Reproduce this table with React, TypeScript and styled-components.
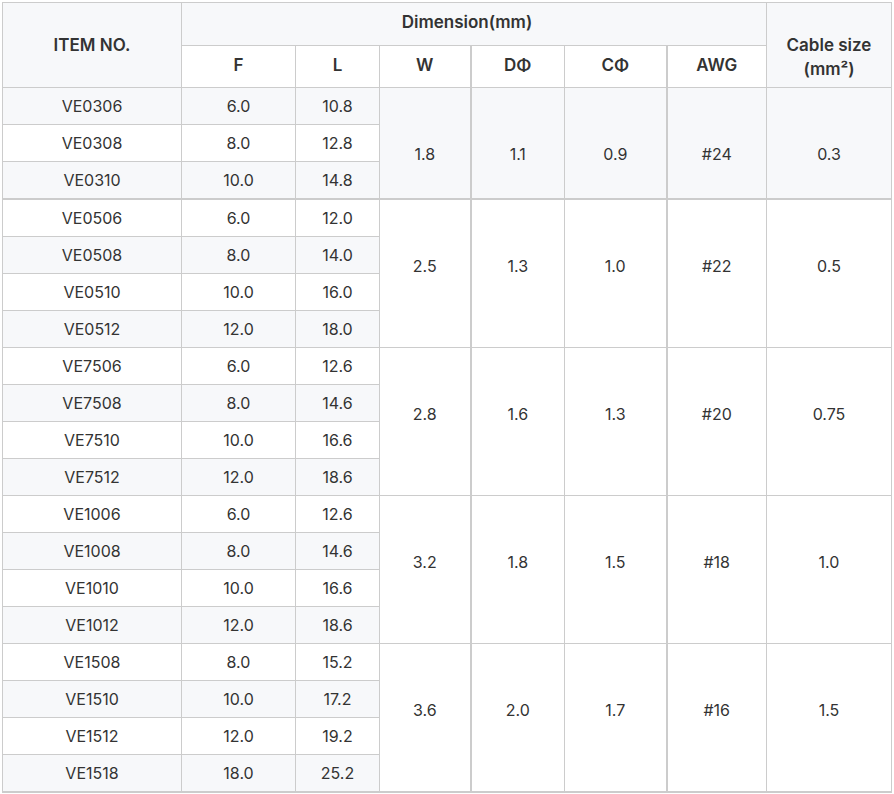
import React from "react";
import styled, { createGlobalStyle } from "styled-components";

const Global = createGlobalStyle`
  html, body { margin: 0; padding: 0; background: #ffffff; }
  body { font-family: Inter, "Noto Sans", "Liberation Sans", sans-serif; color: #333333; }
`;

const Wrap = styled.div`
  padding: 2px 3px 2px 2px;
`;

const Table = styled.table`
  width: 889px;
  border-collapse: collapse;
  table-layout: fixed;
  font-size: 16px;
  line-height: 22px;
`;

const HeadCell = styled.th<{ $white?: boolean; $low?: boolean; $thickLeft?: boolean }>`
  border: 1px solid #cccccc;
  ${(p) => (p.$thickLeft ? "border-left: 2px solid #cccccc;" : "")}
  background: ${(p) => (p.$white ? "#ffffff" : "#f7f8fa")};
  font-weight: 600;
  font-size: 17px;
  line-height: 24px;
  color: #333333;
  text-align: center;
  vertical-align: ${(p) => (p.$low ? "bottom" : "middle")};
  padding: ${(p) => (p.$low ? "0 6px 6px" : p.$white ? "0 8px 4px" : "0 8px 1px")};
  height: ${(p) => (p.$low ? "auto" : p.$white ? "37px" : "41px")};
`;

const DimHead = styled(HeadCell)`
  padding: 0 22px 5px 8px;
  height: 37px;
`;

const Row = styled.tr`
  background: #ffffff;
  &:nth-child(odd) {
    background: #f7f8fa;
  }
`;

const Cell = styled.td<{ $groupTop?: boolean; $thickLeft?: boolean; $bottom?: boolean }>`
  border: 1px solid #cccccc;
  ${(p) => (p.$groupTop ? "border-top: 2px solid #cccccc;" : "")}
  ${(p) => (p.$thickLeft ? "border-left: 2px solid #cccccc;" : "")}
  ${(p) => (p.$bottom ? "border-bottom: 2px solid #cccccc;" : "")}
  text-align: center;
  vertical-align: middle;
  height: 36px;
  padding: 0 8px;
  font-weight: 400;
  color: #333333;
`;

const SpanCell = styled(Cell)`
  vertical-align: top;
  padding-top: 55px;
`;

type Item = [string, string, string];
type Group = {
  items: Item[];
  w: string;
  d: string;
  c: string;
  awg: string;
  cable: string;
};

const groups: Group[] = [
  {
    items: [
      ["VE0306", "6.0", "10.8"],
      ["VE0308", "8.0", "12.8"],
      ["VE0310", "10.0", "14.8"],
    ],
    w: "1.8",
    d: "1.1",
    c: "0.9",
    awg: "#24",
    cable: "0.3",
  },
  {
    items: [
      ["VE0506", "6.0", "12.0"],
      ["VE0508", "8.0", "14.0"],
      ["VE0510", "10.0", "16.0"],
      ["VE0512", "12.0", "18.0"],
    ],
    w: "2.5",
    d: "1.3",
    c: "1.0",
    awg: "#22",
    cable: "0.5",
  },
  {
    items: [
      ["VE7506", "6.0", "12.6"],
      ["VE7508", "8.0", "14.6"],
      ["VE7510", "10.0", "16.6"],
      ["VE7512", "12.0", "18.6"],
    ],
    w: "2.8",
    d: "1.6",
    c: "1.3",
    awg: "#20",
    cable: "0.75",
  },
  {
    items: [
      ["VE1006", "6.0", "12.6"],
      ["VE1008", "8.0", "14.6"],
      ["VE1010", "10.0", "16.6"],
      ["VE1012", "12.0", "18.6"],
    ],
    w: "3.2",
    d: "1.8",
    c: "1.5",
    awg: "#18",
    cable: "1.0",
  },
  {
    items: [
      ["VE1508", "8.0", "15.2"],
      ["VE1510", "10.0", "17.2"],
      ["VE1512", "12.0", "19.2"],
      ["VE1518", "18.0", "25.2"],
    ],
    w: "3.6",
    d: "2.0",
    c: "1.7",
    awg: "#16",
    cable: "1.5",
  },
];

const widths = [179, 114, 84, 91, 94, 102, 100, 125];

export default function App() {
  return (
    <>
      <Global />
      <Wrap>
        <Table>
          <colgroup>
            {widths.map((w, i) => (
              <col key={i} style={{ width: w }} />
            ))}
          </colgroup>
          <thead>
            <tr>
              <HeadCell rowSpan={2}>ITEM NO.</HeadCell>
              <DimHead colSpan={6}>Dimension(mm)</DimHead>
              <HeadCell rowSpan={2} $low>
                Cable size
                <br />
                (mm²)
              </HeadCell>
            </tr>
            <tr>
              <HeadCell $white>F</HeadCell>
              <HeadCell $white>L</HeadCell>
              <HeadCell $white>W</HeadCell>
              <HeadCell $white $thickLeft>DΦ</HeadCell>
              <HeadCell $white>CΦ</HeadCell>
              <HeadCell $white $thickLeft>AWG</HeadCell>
            </tr>
          </thead>
          <tbody>
            {groups.flatMap((g, gi) =>
              g.items.map((it, i) => {
                const top = i === 0 && gi === 1;
                const n = g.items.length;
                const lastGroup = gi === groups.length - 1;
                const lastRow = lastGroup && i === n - 1;
                return (
                  <Row key={it[0]}>
                    <Cell $groupTop={top} $bottom={lastRow}>{it[0]}</Cell>
                    <Cell $groupTop={top} $bottom={lastRow}>{it[1]}</Cell>
                    <Cell $groupTop={top} $bottom={lastRow}>{it[2]}</Cell>
                    {i === 0 && (
                      <>
                        <SpanCell $groupTop={top} $bottom={lastGroup} rowSpan={n}>{g.w}</SpanCell>
                        <SpanCell $groupTop={top} $bottom={lastGroup} $thickLeft rowSpan={n}>{g.d}</SpanCell>
                        <SpanCell $groupTop={top} $bottom={lastGroup} rowSpan={n}>{g.c}</SpanCell>
                        <SpanCell $groupTop={top} $bottom={lastGroup} $thickLeft rowSpan={n}>{g.awg}</SpanCell>
                        <SpanCell $groupTop={top} $bottom={lastGroup} rowSpan={n}>{g.cable}</SpanCell>
                      </>
                    )}
                  </Row>
                );
              })
            )}
          </tbody>
        </Table>
      </Wrap>
    </>
  );
}
